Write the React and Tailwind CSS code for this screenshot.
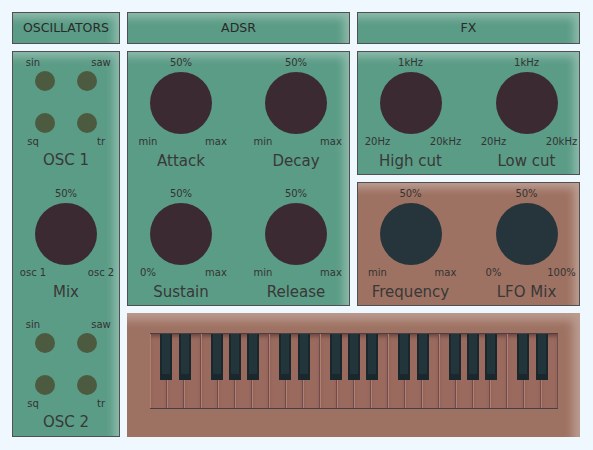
const panel =
  'border border-[#505050] shadow-[inset_-7px_7px_9px_-2px_rgba(255,255,255,0.32)]';

const LabelRow = ({ left, right }) => (
  <div className="flex justify-between w-[68px] ml-[2px] text-[10px] leading-[12px]">
    <div className="w-0 flex justify-center whitespace-nowrap">{left}</div>
    <div className="w-0 flex justify-center whitespace-nowrap">{right}</div>
  </div>
);

const Knob = ({ top, left, right, title, color = 'bg-[#3c2a33]' }) => (
  <div className="w-[90px] flex flex-col items-center pt-[5px]">
    <div className="text-[10px] leading-[12px]">{top}</div>
    <div className={`mt-[3px] w-[62px] h-[62px] rounded-full ${color}`} />
    <div className="mt-[2px]">
      <LabelRow left={left} right={right} />
    </div>
    <div className="mt-[4px] text-[15px] leading-[18px] text-[#383838]">{title}</div>
  </div>
);

const Osc = ({ title }) => (
  <div className="h-[131px] shrink-0 flex flex-col items-center pt-[5px]">
    <LabelRow left="sin" right="saw" />
    <div className="mt-[2px] flex gap-[22px]">
      <div className="w-5 h-5 rounded-full bg-[#4c5a3f]" />
      <div className="w-5 h-5 rounded-full bg-[#4c5a3f]" />
    </div>
    <div className="mt-[22px] flex gap-[22px]">
      <div className="w-5 h-5 rounded-full bg-[#4c5a3f]" />
      <div className="w-5 h-5 rounded-full bg-[#4c5a3f]" />
    </div>
    <div className="mt-[3px]">
      <LabelRow left="sq" right="tr" />
    </div>
    <div className="mt-[3px] text-[15px] leading-[18px] text-[#383838]">{title}</div>
  </div>
);

// black key offsets inside one octave (white key = 17px)
const blackOffsets = [10, 29, 61, 79, 97];

const Keyboard = () => {
  const whites = Array.from({ length: 24 });
  const blacks = [];
  for (let o = 0; o < 4; o++) {
    blackOffsets.forEach((b, i) => {
      if (o === 3 && i > 1) return;
      blacks.push(o * 119 + b);
    });
  }
  return (
    <div className="relative w-[408px] flex border-t border-b border-[#4a3d45]">
      {whites.map((_, i) => (
        <div
          key={i}
          className="w-[17px] h-[74px] bg-[#9b6a5e] border-l border-[#b08070] border-r-[1px] border-r-[#6e4b50] shadow-[inset_0_4px_4px_-2px_rgba(40,20,20,0.45)]"
        />
      ))}
      {blacks.map((x) => (
        <div
          key={x}
          className="absolute top-0 w-[12px] h-[46px] bg-[#1a282d] px-[2px] pb-[6px]"
          style={{ left: x }}
        >
          <div className="w-full h-full bg-[#21353a]" />
        </div>
      ))}
    </div>
  );
};

export default function App() {
  return (
    <div className="w-[593px] h-[450px] bg-[#f0f8ff] p-[12px] text-[#333] font-['DejaVu_Sans',sans-serif]">
      <div className="grid grid-cols-[108px_223px_223px] grid-rows-[32px_124px_124px_124px] gap-[7px]">
        <div className={`${panel} bg-[#5b9c86] flex items-center justify-center text-[12.5px] text-[#2a2a2a]`}>
          OSCILLATORS
        </div>
        <div className={`${panel} bg-[#5b9c86] flex items-center justify-center text-[12.5px] text-[#2a2a2a]`}>
          ADSR
        </div>
        <div className={`${panel} bg-[#5b9c86] flex items-center justify-center text-[12.5px] text-[#2a2a2a]`}>
          FX
        </div>

        <div className={`${panel} bg-[#5b9c86] row-span-3 flex flex-col overflow-hidden`}>
          <Osc title="OSC 1" />
          <div className="h-[131px] shrink-0 flex justify-center">
            <Knob top="50%" left="osc 1" right="osc 2" title="Mix" />
          </div>
          <Osc title="OSC 2" />
        </div>

        <div className={`${panel} bg-[#5b9c86] row-span-2 flex flex-col`}>
          <div className="h-[131px] shrink-0 flex justify-center gap-[25px]">
            <Knob top="50%" left="min" right="max" title="Attack" />
            <Knob top="50%" left="min" right="max" title="Decay" />
          </div>
          <div className="flex justify-center gap-[25px]">
            <Knob top="50%" left="0%" right="max" title="Sustain" />
            <Knob top="50%" left="min" right="max" title="Release" />
          </div>
        </div>

        <div className={`${panel} bg-[#5b9c86] flex justify-center gap-[26px]`}>
          <Knob top="1kHz" left="20Hz" right="20kHz" title="High cut" />
          <Knob top="1kHz" left="20Hz" right="20kHz" title="Low cut" />
        </div>

        <div className={`${panel} bg-[#9e7262] flex justify-center gap-[26px]`}>
          <Knob top="50%" left="min" right="max" title="Frequency" color="bg-[#26353c]" />
          <Knob top="50%" left="0%" right="100%" title="LFO Mix" color="bg-[#26353c]" />
        </div>

        <div className="col-span-2 bg-[#9e7262] shadow-[inset_-9px_9px_10px_-2px_rgba(255,255,255,0.3)] flex justify-center items-start pt-[20px]">
          <Keyboard />
        </div>
      </div>
    </div>
  );
}
